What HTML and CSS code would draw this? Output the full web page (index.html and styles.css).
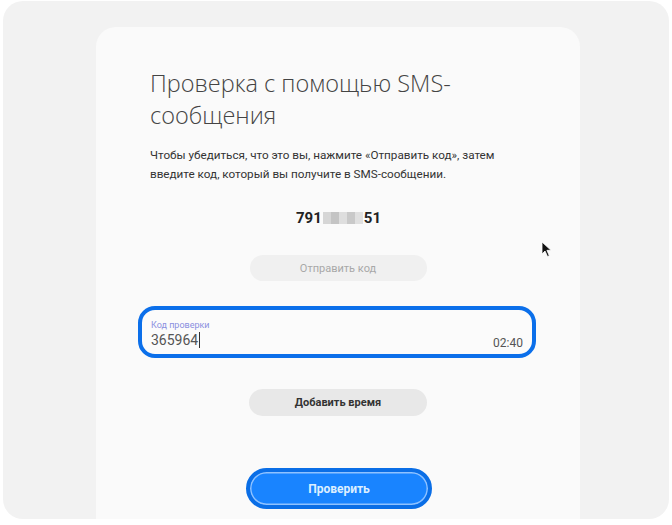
FILE: index.html
```html
<!DOCTYPE html>
<html lang="ru">
<head>
<meta charset="utf-8">
<title>Проверка с помощью SMS-сообщения</title>
<link rel="stylesheet" href="styles.css">
</head>
<body>
<div class="frame">
  <div class="card">
    <h1 class="title">Проверка с помощью SMS-<br>сообщения</h1>
    <p class="desc">Чтобы убедиться, что это вы, нажмите «Отправить код», затем<br>введите код, который вы получите в SMS-сообщении.</p>
    <div class="phone">791<span class="blur"><i></i><i></i><i></i><i></i><i></i></span>51</div>
    <button class="btn btn-send" type="button">Отправить код</button>
    <div class="field">
      <div class="field-main">
        <span class="field-label">Код проверки</span>
        <span class="field-value">365964<span class="caret"></span></span>
      </div>
      <span class="field-timer">02:40</span>
    </div>
    <button class="btn btn-add" type="button">Добавить время</button>
    <button class="btn btn-verify" type="button">Проверить</button>
  </div>
  <svg class="pointer" width="11" height="17" viewBox="0 0 11 17" aria-hidden="true">
    <path d="M1 1 L1 13 L4 10 L6.5 15.5 L8.3 14.7 L5.9 9.3 L10 9.3 Z" fill="#111" stroke="#fff" stroke-width="0.8"/>
  </svg>
</div>
</body>
</html>
```
FILE: styles.css
```css
* { box-sizing: border-box; }
html, body { margin: 0; padding: 0; background: #ffffff; }
body { font-family: "Open Sans", "Noto Sans", sans-serif; }

.frame {
  position: relative;
  margin: 1px 0 0 3px;
  width: 666px;
  height: 518px;
  background: #f2f2f2;
  border-radius: 20px;
  overflow: hidden;
  padding: 26px 0 0 93px;
}

.card {
  width: 484px;
  height: 500px;
  background: #fafafa;
  border-radius: 20px 20px 0 0;
  padding: 40px 44px 0 42px;
  display: flex;
  flex-direction: column;
  align-items: center;
}

.title {
  align-self: stretch;
  margin: 0 0 0 12px;
  font-family: "Open Sans", sans-serif;
  font-weight: 300;
  font-size: 23.5px;
  line-height: 32px;
  color: #444;
}

.desc {
  align-self: stretch;
  margin: 15px 0 0 12px;
  font-family: Roboto, sans-serif;
  font-size: 11.7px;
  line-height: 19px;
  color: #333;
}

.phone {
  margin-top: 24px;
  margin-left: 3px;
  font-family: Roboto, sans-serif;
  font-weight: 700;
  font-size: 15px;
  line-height: 20px;
  color: #222;
  display: flex;
  align-items: center;
}
.blur { display: inline-flex; height: 12px; margin: 0 1px; }
.blur i { display: block; width: 8px; height: 12px; background: #d6d6d6; }
.blur i:nth-child(2) { background: #c4c4c4; }
.blur i:nth-child(3) { background: #dedede; }
.blur i:nth-child(4) { background: #c9c9c9; }
.blur i:nth-child(5) { background: #e0e0e0; }

.btn {
  border: 0;
  border-radius: 14px;
  font-family: Roboto, sans-serif;
  font-size: 11px;
  cursor: pointer;
}
.btn-send {
  margin-top: 27px;
  margin-left: 2px;
  width: 177px;
  height: 26px;
  background: #f0f0f0;
  color: #a8a8a8;
}

.field {
  margin-top: 25px;
  align-self: stretch;
  height: 52px;
  border: 4px solid #0b6fea;
  border-radius: 17px;
  background: #fbfbfb;
  padding: 0 9px;
  display: flex;
  align-items: flex-end;
  justify-content: space-between;
}
.field-main { display: flex; flex-direction: column; padding-bottom: 5px; }
.field-label {
  font-family: Roboto, sans-serif;
  font-size: 9px;
  line-height: 12px;
  color: #8a8fe0;
}
.field-value {
  font-family: Roboto, sans-serif;
  font-size: 14px;
  line-height: 18px;
  color: #555;
  display: flex;
  align-items: center;
}
.caret { display: inline-block; width: 1px; height: 16px; background: #333; margin-left: 1px; }
.field-timer {
  font-family: Roboto, sans-serif;
  font-size: 12px;
  line-height: 16px;
  color: #555;
  padding-bottom: 3px;
}

.btn-add {
  margin-top: 31px;
  margin-left: 2px;
  width: 178px;
  height: 27px;
  background: #e8e8e8;
  color: #333;
  font-weight: 700;
}

.btn-verify {
  margin-top: 52px;
  margin-left: 4px;
  width: 186px;
  height: 41px;
  border-radius: 21px;
  border: 4px solid #0a6ee6;
  background: #1984ff;
  box-shadow: inset 0 0 0 1.5px #8fc2ff;
  color: #dcefff;
  font-weight: 700;
  font-size: 12px;
}

.pointer { position: absolute; left: 538px; top: 240px; }
```
